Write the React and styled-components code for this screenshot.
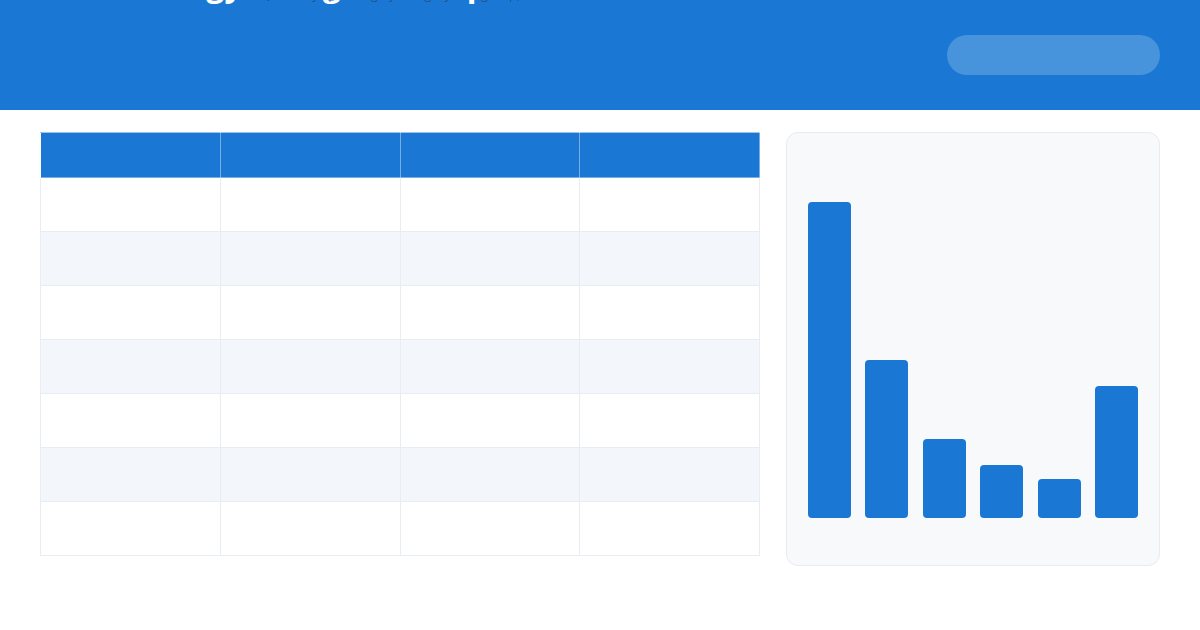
import styled, { createGlobalStyle } from "styled-components";

const GlobalStyle = createGlobalStyle`
  html, body {
    margin: 0;
    padding: 0;
    background: #ffffff;
    font-family: "Open Sans", "Liberation Sans", sans-serif;
    overflow: hidden;
  }
`;

const Page = styled.div`
  width: 1200px;
  height: 630px;
  display: flex;
  flex-direction: column;
  background: #ffffff;
`;

const Header = styled.header`
  height: 110px;
  flex-shrink: 0;
  background: #1a78d4;
  display: flex;
  align-items: flex-start;
  justify-content: space-between;
  padding: 0 40px;
  box-sizing: border-box;
  overflow: hidden;
`;

const Brand = styled.div`
  margin-top: -36px;
  padding-left: 21px;
  display: grid;
`;

const Title = styled.h1`
  grid-area: 1 / 1;
  margin: 0;
  font-size: 32px;
  line-height: 40px;
  font-weight: 700;
  color: #ffffff;
  white-space: nowrap;
`;

const Subtitle = styled.p`
  grid-area: 1 / 1;
  align-self: start;
  margin: 22px 0 0 200px;
  font-size: 13px;
  line-height: 16px;
  color: rgba(40, 50, 70, 0.55);
  white-space: nowrap;
`;

const Pill = styled.button`
  align-self: center;
  width: 213px;
  height: 40px;
  border: none;
  border-radius: 20px;
  background: rgba(255, 255, 255, 0.2);
  cursor: pointer;
`;

const Main = styled.main`
  display: flex;
  gap: 26px;
  padding: 22px 40px 0;
  align-items: flex-start;
`;

const Table = styled.table`
  width: 720px;
  border-collapse: collapse;
  table-layout: fixed;
  flex-shrink: 0;
`;

const Th = styled.th`
  height: 44px;
  padding: 0;
  background: #1a78d4;
  border: 1px solid rgba(255, 255, 255, 0.4);
  border-top-color: #9cc3ec;
`;

const Tr = styled.tr`
  background: ${(p) => (p.$alt ? "#f3f6fb" : "#ffffff")};
`;

const Td = styled.td`
  height: 53px;
  padding: 0;
  border: 1px solid #e8edf3;
`;

const ChartCard = styled.section`
  width: 374px;
  height: 434px;
  box-sizing: border-box;
  background: #f8f9fb;
  border: 1px solid #e8ebf1;
  border-radius: 12px;
  padding: 0 21px 47px;
  display: flex;
  align-items: flex-end;
  gap: 14.4px;
`;

const Bar = styled.div`
  flex: 1;
  background: #1a78d4;
  border-radius: 4px;
`;

const bars = [316, 158, 79, 53, 39, 132];
const rows = [0, 1, 2, 3, 4, 5, 6];
const cols = [0, 1, 2, 3];

export default function App() {
  return (
    <Page>
      <GlobalStyle />
      <Header>
        <Brand>
          <Title>Technology, Budgets &amp; Expenses</Title>
          <Subtitle>Quarterly spending by category and group, in thousands</Subtitle>
        </Brand>
        <Pill aria-label="action" />
      </Header>
      <Main>
        <Table>
          <thead>
            <tr>
              {cols.map((c) => (
                <Th key={c} />
              ))}
            </tr>
          </thead>
          <tbody>
            {rows.map((r) => (
              <Tr key={r} $alt={r % 2 === 1}>
                {cols.map((c) => (
                  <Td key={c} />
                ))}
              </Tr>
            ))}
          </tbody>
        </Table>
        <ChartCard>
          {bars.map((h, i) => (
            <Bar key={i} style={{ height: h }} />
          ))}
        </ChartCard>
      </Main>
    </Page>
  );
}
